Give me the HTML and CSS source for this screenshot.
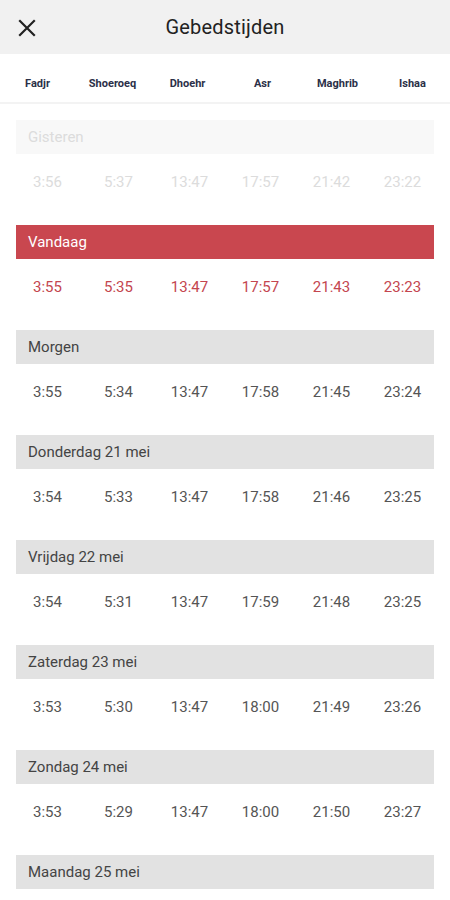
FILE: index.html
```html
<!DOCTYPE html>
<html lang="nl">
<head>
  <meta charset="UTF-8">
  <meta name="viewport" content="width=device-width, initial-scale=1.0">
  <title>Gebedstijden</title>
  <link rel="stylesheet" href="styles.css">
</head>
<body>
  <div class="topbar">
    <button class="close" aria-label="Sluiten">
      <svg width="18" height="18" viewBox="0 0 18 18"><path d="M2 2L16 16M16 2L2 16" stroke="#222" stroke-width="2.2" stroke-linecap="square"/></svg>
    </button>
    <h1>Gebedstijden</h1>
  </div>

  <div class="prayers">
    <span>Fadjr</span>
    <span>Shoeroeq</span>
    <span>Dhoehr</span>
    <span>Asr</span>
    <span>Maghrib</span>
    <span>Ishaa</span>
  </div>

  <div class="days" id="days"></div>

  <script>
    // the last day's times fall below the screen, so they are left out
    const days = [
      { name: 'Gisteren', times: ['3:56', '5:37', '13:47', '17:57', '21:42', '23:22'], type: 'past' },
      { name: 'Vandaag', times: ['3:55', '5:35', '13:47', '17:57', '21:43', '23:23'], type: 'today' },
      { name: 'Morgen', times: ['3:55', '5:34', '13:47', '17:58', '21:45', '23:24'] },
      { name: 'Donderdag 21 mei', times: ['3:54', '5:33', '13:47', '17:58', '21:46', '23:25'] },
      { name: 'Vrijdag 22 mei', times: ['3:54', '5:31', '13:47', '17:59', '21:48', '23:25'] },
      { name: 'Zaterdag 23 mei', times: ['3:53', '5:30', '13:47', '18:00', '21:49', '23:26'] },
      { name: 'Zondag 24 mei', times: ['3:53', '5:29', '13:47', '18:00', '21:50', '23:27'] },
      { name: 'Maandag 25 mei', times: [] }
    ];

    const list = document.getElementById('days');
    days.forEach((day) => {
      const block = document.createElement('div');
      block.className = 'day' + (day.type ? ' ' + day.type : '');

      const label = document.createElement('div');
      label.className = 'day-label';
      label.textContent = day.name;
      block.appendChild(label);

      if (day.times.length) {
        const row = document.createElement('div');
        row.className = 'times';
        day.times.forEach((t) => {
          const cell = document.createElement('span');
          cell.textContent = t;
          row.appendChild(cell);
        });
        block.appendChild(row);
      }

      list.appendChild(block);
    });
  </script>
</body>
</html>
```

FILE: styles.css
```css
body {
  margin: 0;
  font-family: Roboto, "Liberation Sans", Arial, sans-serif;
  background: #fff;
  height: 900px;
  overflow: hidden;
}
.topbar {
  height: 54px;
  background: #f1f1f1;
  display: flex;
  align-items: center;
  justify-content: center;
  position: relative;
}
.close {
  position: absolute;
  left: 12px;
  top: 13px;
  width: 30px;
  height: 30px;
  padding: 0;
  border: none;
  background: none;
  display: flex;
  align-items: center;
  justify-content: center;
}
h1 {
  margin: 0;
  font-size: 20px;
  font-weight: 400;
  color: #222;
  letter-spacing: 0.2px;
}
.prayers {
  box-sizing: border-box;
  height: 50px;
  padding-top: 10px;
  display: grid;
  grid-template-columns: repeat(6, 1fr);
  align-items: center;
  text-align: center;
  font-size: 11px;
  font-weight: 700;
  color: #2b3048;
  border-bottom: 2px solid #f3f3f3;
}
.days {
  padding-top: 16px;
}
.day-label {
  margin: 0 16px;
  height: 34px;
  line-height: 35px;
  padding-left: 12px;
  background: #e2e2e2;
  font-size: 15px;
  color: #444;
}
.times {
  height: 56px;
  margin-bottom: 15px;
  padding: 0 12px;
  display: grid;
  grid-template-columns: repeat(6, 1fr);
  align-items: center;
  text-align: center;
  font-size: 15px;
  color: #555;
}
.past .day-label {
  background: #f8f8f8;
  color: #dcdcdc;
}
.past .times {
  color: #dcdcdc;
}
.today .day-label {
  background: #c9474f;
  color: #fff;
}
.today .times {
  color: #c4464f;
}
```
